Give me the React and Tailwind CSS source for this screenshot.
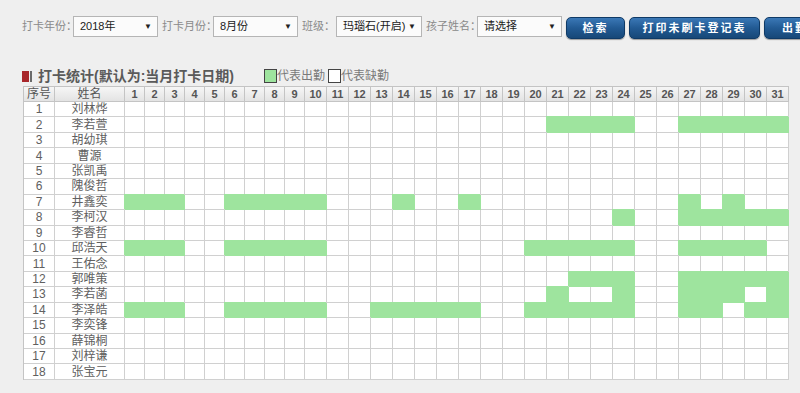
import React from 'react';

const names = [
  '刘林烨', '李若萱', '胡幼琪', '曹源', '张凯禹', '隗俊哲', '井鑫奕', '李柯汉', '李睿哲',
  '邱浩天', '王佑念', '郭唯策', '李若菡', '李泽皓', '李奕锋', '薛锦桐', '刘梓谦', '张宝元',
];

// attended days per row (1-based row index)
const present = {
  2: [21, 22, 23, 24, 27, 28, 29, 30, 31],
  7: [1, 2, 3, 6, 7, 8, 9, 10, 14, 17, 27, 29],
  8: [24, 27, 28, 29, 30, 31],
  10: [1, 2, 3, 6, 7, 8, 9, 10, 20, 21, 22, 23, 24, 27, 28, 29, 30],
  12: [22, 23, 24, 27, 28, 29, 30, 31],
  13: [21, 24, 27, 28, 29, 31],
  14: [1, 2, 3, 6, 7, 8, 9, 10, 13, 14, 15, 16, 17, 20, 21, 22, 23, 24, 27, 28, 30, 31],
};

const days = Array.from({ length: 31 }, (_, i) => i + 1);

const Label = ({ width, children }) => (
  <span className={`${width} shrink-0 leading-[21px] text-[11px] text-[#8a8a8a]`}>{children}</span>
);

const Select = ({ width, value }) => (
  <div className={`${width} shrink-0 h-[21px] flex items-center justify-between bg-[#fbfbfb] border border-[#b5b5b5] pl-[6px] pr-[5px] text-[11px] text-[#1a1a1a]`}>
    <span>{value}</span>
    <span className="text-[8px] text-[#222]">▼</span>
  </div>
);

const Button = ({ width, children }) => (
  <button className={`${width} h-[22px] mt-px shrink-0 rounded-[5px] border border-[#0f3a66] bg-gradient-to-b from-[#3b78b6] via-[#225a93] to-[#174878] text-white text-[11px] font-bold tracking-[2px] shadow-[0_1px_1px_rgba(0,0,0,0.35)]`}>
    {children}
  </button>
);

export default function App() {
  return (
    <div className="w-[800px] h-[393px] overflow-hidden bg-[#efefef] font-['Liberation_Sans','Noto_Sans_CJK_SC',sans-serif] whitespace-nowrap">
      {/* filters */}
      <div className="flex items-start pt-4 pl-[22px] gap-1 h-[39px]">
        <Label width="w-[47px]">打卡年份：</Label>
        <Select width="w-[85px]" value="2018年" />
        <Label width="w-[47px]">打卡月份：</Label>
        <Select width="w-[85px]" value="8月份" />
        <Label width="w-[30px]">班级：</Label>
        <Select width="w-[86px]" value="玛瑙石(开启)" />
        <Label width="w-[47px]">孩子姓名：</Label>
        <Select width="w-[85px]" value="请选择" />
        <Button width="w-[59px]">检索</Button>
        <Button width="w-[131px]">打印未刷卡登记表</Button>
        <Button width="w-[88px]">出勤统计</Button>
      </div>

      {/* title + legend */}
      <div className="flex items-center h-[16px] mt-[29px] pl-[22px]">
        <span className="w-[7px] h-[11px] bg-[#a8262a]"></span>
        <span className="w-[2px] h-[11px] ml-px bg-[#6b6b6b]"></span>
        <span className="ml-[6px] text-[14px] font-bold text-[#5a5a5a]">打卡统计(默认为:当月打卡日期)</span>
        <span className="ml-[30px] w-[13px] h-[14px] bg-[#9ee49e] border border-[#444]"></span>
        <span className="text-[12px] text-[#7a7a7a]">代表出勤</span>
        <span className="ml-[3px] w-[13px] h-[14px] bg-white border border-[#444]"></span>
        <span className="text-[12px] text-[#7a7a7a]">代表缺勤</span>
      </div>

      {/* attendance grid */}
      <table className="mt-[2px] ml-[23px] w-[765px] table-fixed border-separate border-spacing-0 border-l border-t border-[#c4c4c4] text-center">
        <colgroup>
          <col className="w-[31px]" />
          <col className="w-[70px]" />
          {days.map((d) => (
            <col key={d} className={d < 10 ? 'w-[20px]' : 'w-[22px]'} />
          ))}
        </colgroup>
        <thead>
          <tr className="h-[15px] bg-gradient-to-b from-[#f6f6f6] to-[#e2e2e2]">
            <th className="p-0 border-r border-b border-[#c4c4c4] text-[12px] font-normal text-[#555] leading-[14px]">序号</th>
            <th className="p-0 border-r border-b border-[#c4c4c4] text-[12px] font-normal text-[#555] leading-[14px]">姓名</th>
            {days.map((d) => (
              <th key={d} className="p-0 border-r border-b border-[#c4c4c4] text-[11px] font-bold text-[#555] leading-[14px]">{d}</th>
            ))}
          </tr>
        </thead>
        <tbody>
          {names.map((name, i) => {
            const row = i + 1;
            const on = present[row] || [];
            return (
              <tr key={row} className="h-[15.45px] bg-white">
                <td className="p-0 border-r border-b border-[#d0d0d0] text-[12px] text-[#606060] leading-[14px]">{row}</td>
                <td className="p-0 border-r border-b border-[#d0d0d0] text-[12px] text-[#606060] leading-[14px]">{name}</td>
                {days.map((d) =>
                  on.includes(d) ? (
                    <td key={d} className="p-0 border-r border-b border-[#9ee49e] bg-[#9ee49e] shadow-[-1px_-1px_0_0_#9ee49e]"></td>
                  ) : (
                    <td key={d} className="p-0 border-r border-b border-[#d0d0d0]"></td>
                  )
                )}
              </tr>
            );
          })}
        </tbody>
      </table>
    </div>
  );
}
